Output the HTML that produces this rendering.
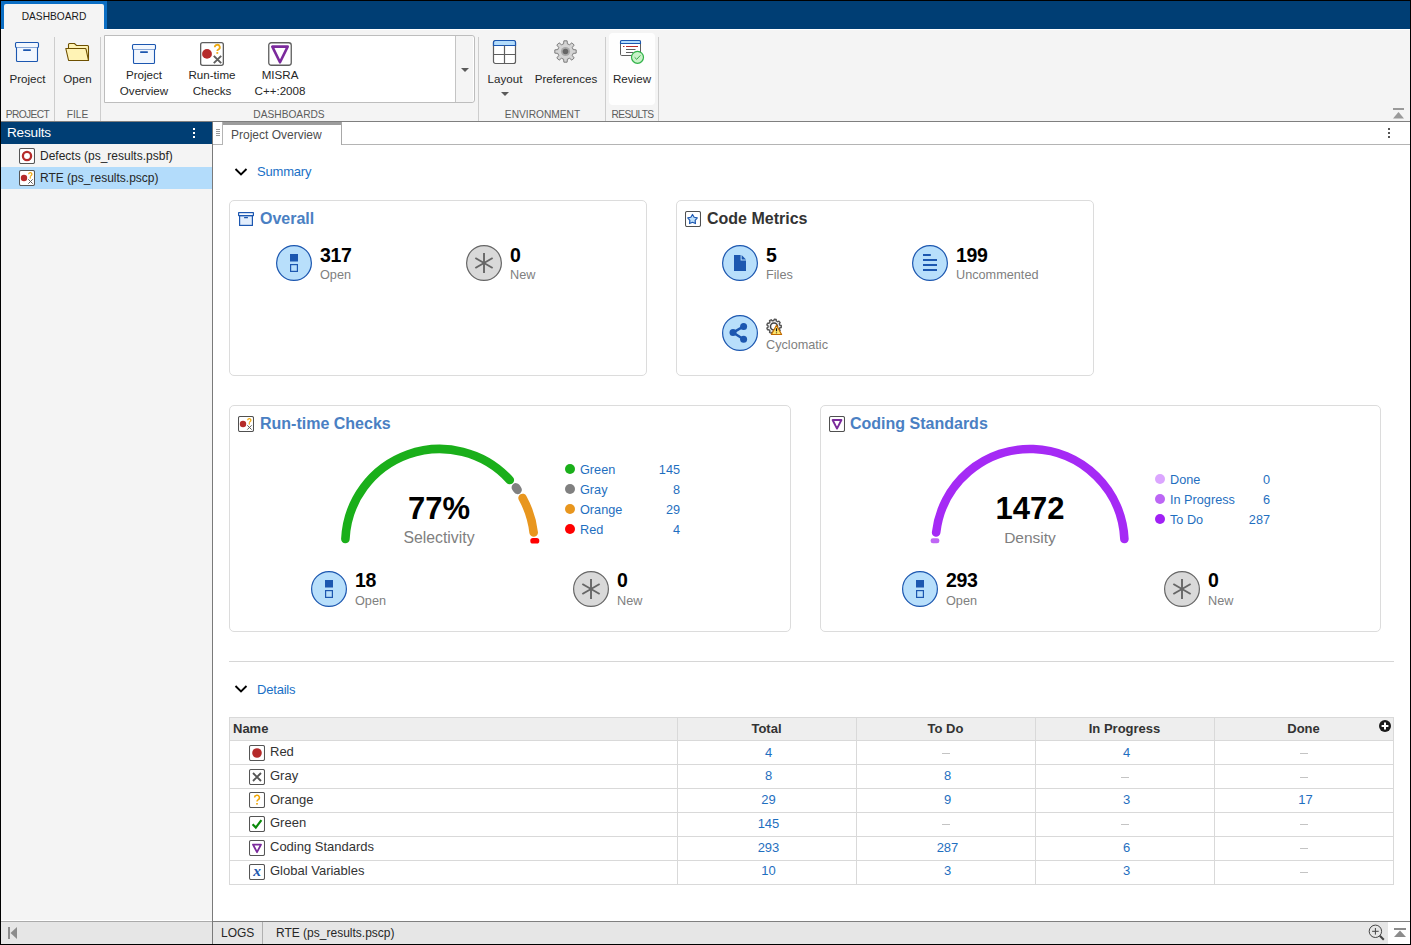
<!DOCTYPE html>
<html><head><meta charset="utf-8">
<style>
html,body{margin:0;padding:0;}
body{width:1411px;height:945px;position:relative;overflow:hidden;background:#000;font-family:"Liberation Sans",sans-serif;}
.a{position:absolute;}
.t{position:absolute;white-space:nowrap;line-height:1;font-family:"Liberation Sans",sans-serif;}
.c{text-align:center;}
.r{text-align:right;}
.sep{position:absolute;width:1px;background:#cdcdcd;}
.lbl{font-size:10.2px;color:#5c5c5c;}
.rb{font-size:11.6px;color:#262626;}
</style></head><body>
<!-- title bar -->
<div class="a" style="left:1px;top:1px;width:1409px;height:28px;background:#003e74;"></div>
<div class="a" style="left:1px;top:1px;width:106px;height:28px;background:#0b6ec4;"></div>
<div class="a" style="left:4px;top:4px;width:100px;height:26px;background:#f4f4f4;border-radius:2px 2px 0 0;"></div>
<div class="t" style="left:4px;top:12px;width:100px;font-size:10.2px;color:#1a1a1a;text-align:center;">DASHBOARD</div>
<div class="a" style="left:1px;top:29px;width:3px;height:1px;background:#fff;"></div>
<div class="a" style="left:104px;top:29px;width:1306px;height:1px;background:#fff;"></div>
<!-- ribbon -->
<div class="a" style="left:1px;top:30px;width:1409px;height:91px;background:#f4f4f4;"></div>
<div class="a" style="left:1px;top:121px;width:1409px;height:1px;background:#7f7f7f;"></div>
<div id="ribbon">
<!-- separators -->
<div class="sep" style="left:54px;top:37px;height:84px;"></div>
<div class="sep" style="left:100px;top:37px;height:84px;"></div>
<div class="sep" style="left:478px;top:37px;height:84px;"></div>
<div class="sep" style="left:605px;top:37px;height:84px;"></div>
<div class="sep" style="left:658px;top:37px;height:84px;"></div>
<!-- project -->
<svg class="a" style="left:14px;top:41px;" width="26" height="22" viewBox="0 0 26 22">
<rect x="1.5" y="1.5" width="23" height="5" rx="1" fill="#f2f7fe" stroke="#1c57b0" stroke-width="1.1"/>
<path d="M2.5 6.5 V19.5 a1 1 0 0 0 1 1 H22.5 a1 1 0 0 0 1 -1 V6.5" fill="#f2f7fe" stroke="#1c57b0" stroke-width="1.1"/>
<rect x="9" y="8.2" width="8" height="1.8" rx="0.8" fill="#1c57b0"/>
</svg>
<div class="t rb c" style="left:0px;top:73px;width:55px;">Project</div>
<div class="t lbl c" style="left:0px;top:110px;width:55px;letter-spacing:-0.6px;">PROJECT</div>
<!-- open -->
<svg class="a" style="left:64px;top:42px;" width="26" height="20" viewBox="0 0 26 20">
<path d="M4.5 10 V2.5 a1 1 0 0 1 1 -1 H10.5 l2 2 H23.5 a1 1 0 0 1 1 1 V18.5 H5" fill="#fff3b5" stroke="#6e5000" stroke-width="1.1"/>
<path d="M1.8 6.5 H21.2 a1 1 0 0 1 0.9 0.8 L24.5 18.5 H4.6 Z" fill="#fff3b5" stroke="#6e5000" stroke-width="1.1" stroke-linejoin="round"/>
</svg>
<div class="t rb c" style="left:55px;top:73px;width:45px;">Open</div>
<div class="t lbl c" style="left:55px;top:110px;width:45px;">FILE</div>
<!-- gallery -->
<div class="a" style="left:104px;top:35px;width:369px;height:66px;background:#fff;border:1px solid #bdbdbd;border-radius:0 3px 3px 0;"></div>
<div class="a" style="left:456px;top:36px;width:17px;height:66px;background:#f4f4f4;border-radius:0 2px 2px 0;"></div>
<div class="a" style="left:455px;top:36px;width:1px;height:66px;background:#c4c4c4;"></div>
<svg class="a" style="left:460px;top:67px;" width="10" height="6" viewBox="0 0 10 6"><path d="M1 1 H9 L5 5 Z" fill="#5a5a5a"/></svg>
<svg class="a" style="left:131px;top:43px;" width="26" height="22" viewBox="0 0 26 22">
<rect x="1.5" y="1.5" width="23" height="5" rx="1" fill="#f2f7fe" stroke="#1c57b0" stroke-width="1.1"/>
<path d="M2.5 6.5 V19.5 a1 1 0 0 0 1 1 H22.5 a1 1 0 0 0 1 -1 V6.5" fill="#f2f7fe" stroke="#1c57b0" stroke-width="1.1"/>
<rect x="9" y="8.2" width="8" height="1.8" rx="0.8" fill="#1c57b0"/>
</svg>
<div class="t rb c" style="left:104px;top:69px;width:80px;">Project</div>
<div class="t rb c" style="left:104px;top:85px;width:80px;">Overview</div>
<svg class="a" style="left:200px;top:42px;" width="24" height="24" viewBox="0 0 24 24">
<rect x="0.65" y="0.65" width="22.7" height="22.7" rx="2" fill="#fff" stroke="#5e5e5e" stroke-width="1.3"/>
<circle cx="7" cy="11.9" r="4.9" fill="#b52a2a"/>
<path d="M14.8 5.2 a2.5 2.5 0 1 1 3.6 2.3 c-0.8 0.4 -1.1 0.7 -1.1 1.6" fill="none" stroke="#eea90f" stroke-width="1.8"/>
<rect x="16.4" y="10.1" width="1.8" height="1.7" fill="#eea90f"/>
<path d="M13.8 13.8 L21.2 21.2 M21.2 13.8 L13.8 21.2" stroke="#5e5e5e" stroke-width="1.9"/>
</svg>
<div class="t rb c" style="left:172px;top:69px;width:80px;">Run-time</div>
<div class="t rb c" style="left:172px;top:85px;width:80px;">Checks</div>
<svg class="a" style="left:268px;top:42px;" width="24" height="24" viewBox="0 0 24 24">
<rect x="0.75" y="0.75" width="22.5" height="22.5" rx="2.5" fill="#fff" stroke="#5e5e5e" stroke-width="1.3"/>
<path d="M4.3 4.6 H19.7 L12 20.3 Z" fill="none" stroke="#7b2a9c" stroke-width="2.6" stroke-linejoin="round"/>
</svg>
<div class="t rb c" style="left:240px;top:69px;width:80px;">MISRA</div>
<div class="t rb c" style="left:240px;top:85px;width:80px;">C++:2008</div>
<div class="t lbl c" style="left:240px;top:110px;width:98px;">DASHBOARDS</div>
<!-- layout -->
<svg class="a" style="left:492px;top:39px;" width="25" height="26" viewBox="0 0 25 26">
<rect x="1.5" y="1.5" width="22" height="23" rx="2" fill="#fff" stroke="#5e5e5e" stroke-width="1.2"/>
<path d="M1.5 6.5 V3.5 a2 2 0 0 1 2 -2 H21.5 a2 2 0 0 1 2 2 V6.5 Z" fill="#b3dcfb" stroke="#1c57b0" stroke-width="1.2"/>
<path d="M12.5 6.5 V24.5 M1.5 15.5 H23.5" stroke="#5e5e5e" stroke-width="1.2"/>
</svg>
<div class="t rb c" style="left:480px;top:73px;width:50px;">Layout</div>
<svg class="a" style="left:500px;top:91px;" width="10" height="6" viewBox="0 0 10 6"><path d="M1 1 H9 L5 5 Z" fill="#5a5a5a"/></svg>
<!-- preferences -->
<svg class="a" style="left:553px;top:39px;" width="25" height="25" viewBox="-12.5 -12.5 25 25">
<path d="M10.68 -1.61 L10.68 1.61 L7.67 1.90 L6.77 4.07 L8.69 6.42 L6.42 8.69 L4.07 6.77 L1.90 7.67 L1.61 10.68 L-1.61 10.68 L-1.90 7.67 L-4.07 6.77 L-6.42 8.69 L-8.69 6.42 L-6.77 4.07 L-7.67 1.90 L-10.68 1.61 L-10.68 -1.61 L-7.67 -1.90 L-6.77 -4.07 L-8.69 -6.42 L-6.42 -8.69 L-4.07 -6.77 L-1.90 -7.67 L-1.61 -10.68 L1.61 -10.68 L1.90 -7.67 L4.07 -6.77 L6.42 -8.69 L8.69 -6.42 L6.77 -4.07 L7.67 -1.90 Z" stroke-linejoin="round" fill="#d4d4d4" stroke="#7c7c7c" stroke-width="1"/>
<circle r="4.6" fill="#a9a9a9"/>
<circle r="2.8" fill="#666"/>
</svg>
<div class="t rb c" style="left:530px;top:73px;width:72px;">Preferences</div>
<div class="t lbl c" style="left:480px;top:110px;width:125px;">ENVIRONMENT</div>
<!-- review -->
<div class="a" style="left:609px;top:33px;width:46px;height:72px;background:#fefefe;border-radius:4px;"></div>
<svg class="a" style="left:619px;top:39px;" width="28" height="26" viewBox="0 0 28 26">
<rect x="1.5" y="1.5" width="20" height="15" rx="1.2" fill="#fff" stroke="#5e5e5e" stroke-width="1"/>
<path d="M1.5 4.5 V2.7 a1.2 1.2 0 0 1 1.2 -1.2 H20.3 a1.2 1.2 0 0 1 1.2 1.2 V4.5 Z" fill="#b3dcfb" stroke="#1c57b0" stroke-width="1.1"/>
<path d="M4 7.5 H5.5 M7 7.5 H19" stroke="#b52a2a" stroke-width="1"/>
<path d="M7 10.5 H16.5 M7 13.5 H14.5" stroke="#5e5e5e" stroke-width="1"/>
<circle cx="18.5" cy="18.3" r="6" fill="#c9f2c9" stroke="#32b34a" stroke-width="1.2"/>
<path d="M15.6 18.3 L17.7 20.3 L21.4 16.4" fill="none" stroke="#2a9e3e" stroke-width="0.9"/>
</svg>
<div class="t rb c" style="left:607px;top:73px;width:50px;">Review</div>
<div class="t lbl c" style="left:606px;top:110px;width:53px;letter-spacing:-0.6px;">RESULTS</div>
<!-- collapse ribbon -->
<div class="a" style="left:1393px;top:108px;width:11px;height:2px;background:#9a9a9a;"></div>
<svg class="a" style="left:1392px;top:111px;" width="13" height="8" viewBox="0 0 13 8"><path d="M1 7.5 L6.5 1 L12 7.5 Z" fill="#9a9a9a"/></svg>
</div>
<!-- left panel -->
<div class="a" style="left:1px;top:122px;width:211px;height:799px;background:#f4f4f4;"></div>
<div class="a" style="left:1px;top:122px;width:211px;height:22px;background:#003e74;"></div>
<div class="t" style="left:7px;top:126px;font-size:13.6px;letter-spacing:-0.2px;color:#fff;">Results</div>
<div class="a" style="left:193px;top:128px;width:2px;height:2px;background:#fff;"></div>
<div class="a" style="left:193px;top:132px;width:2px;height:2px;background:#fff;"></div>
<div class="a" style="left:193px;top:136px;width:2px;height:2px;background:#fff;"></div>
<div class="a" style="left:1px;top:167px;width:211px;height:22px;background:#b3dcfb;"></div>
<div id="leftrows">
<svg class="a" style="left:19px;top:148px;" width="16" height="16" viewBox="0 0 16 16">
<rect x="0.5" y="0.5" width="15" height="15" rx="1.5" fill="#fff" stroke="#555" stroke-width="1.05"/>
<circle cx="8" cy="8" r="4.1" fill="none" stroke="#b52a2a" stroke-width="2.3"/>
</svg>
<div class="t" style="left:40px;top:150px;font-size:12px;color:#262626;">Defects (ps_results.psbf)</div>
<svg class="a" style="left:19px;top:170px;" width="16" height="16" viewBox="0 0 16 16">
<rect x="0.5" y="0.5" width="15" height="15" rx="1.5" fill="#fff" stroke="#555" stroke-width="1.05"/>
<circle cx="5" cy="8" r="3.2" fill="#b52a2a"/>
<path d="M9.7 4.2 a1.6 1.6 0 1 1 2.3 1.5 c-0.5 0.3 -0.7 0.5 -0.7 1.1" fill="none" stroke="#eea90f" stroke-width="1.3"/>
<rect x="10.7" y="7.2" width="1.3" height="1.3" fill="#eea90f"/>
<path d="M9.3 9.3 L13.7 13.7 M13.7 9.3 L9.3 13.7" stroke="#5e5e5e" stroke-width="1"/>
</svg>
<div class="t" style="left:40px;top:172px;font-size:12px;color:#262626;">RTE (ps_results.pscp)</div>
</div>
<div class="a" style="left:1px;top:920px;width:211px;height:1px;background:#fff;"></div>
<div class="a" style="left:212px;top:122px;width:1px;height:822px;background:#7a7a7a;"></div>
<!-- main area -->
<div class="a" style="left:213px;top:122px;width:1197px;height:799px;background:#fff;"></div>
<div id="tabs">
<div class="a" style="left:213px;top:144px;width:1197px;height:1px;background:#b4b4b4;"></div>
<div class="a" style="left:213px;top:122px;width:9px;height:22px;background:#fff;border-right:1px solid #b4b4b4;"></div>
<div class="a" style="left:216px;top:129px;width:4px;height:1px;background:#999;"></div>
<div class="a" style="left:216px;top:131px;width:4px;height:1px;background:#999;"></div>
<div class="a" style="left:216px;top:133px;width:4px;height:1px;background:#999;"></div>
<div class="a" style="left:216px;top:135px;width:4px;height:1px;background:#999;"></div>
<div class="a" style="left:223px;top:122px;width:118px;height:23px;background:#fff;"></div>
<div class="a" style="left:223px;top:122px;width:118px;height:3px;background:#9c9c9c;"></div>
<div class="a" style="left:341px;top:122px;width:1px;height:23px;background:#a8a8a8;"></div>
<div class="t" style="left:231px;top:129px;font-size:12px;color:#4d4d4d;">Project Overview</div>
<div class="a" style="left:1388px;top:128px;width:2px;height:2px;background:#555;"></div>
<div class="a" style="left:1388px;top:132px;width:2px;height:2px;background:#555;"></div>
<div class="a" style="left:1388px;top:136px;width:2px;height:2px;background:#555;"></div>
</div>
<div id="content">
<svg class="a" style="left:234px;top:167px;" width="14" height="10" viewBox="0 0 14 10"><path d="M1.5 2 L7 7.5 L12.5 2" fill="none" stroke="#000" stroke-width="1.9"/></svg>
<div class="t" style="left:257px;top:165px;font-size:13px;color:#1a70c6;letter-spacing:-0.2px;">Summary</div>
<div class="a" style="left:229px;top:200px;width:418px;height:176px;box-sizing:border-box;border:1px solid #dcdcdc;border-radius:5px;background:#fff;"></div>
<div class="a" style="left:676px;top:200px;width:418px;height:176px;box-sizing:border-box;border:1px solid #dcdcdc;border-radius:5px;background:#fff;"></div>
<div class="a" style="left:229px;top:405px;width:562px;height:227px;box-sizing:border-box;border:1px solid #dcdcdc;border-radius:5px;background:#fff;"></div>
<div class="a" style="left:820px;top:405px;width:561px;height:227px;box-sizing:border-box;border:1px solid #dcdcdc;border-radius:5px;background:#fff;"></div>
<svg class="a" style="left:238px;top:212px;" width="16" height="14" viewBox="0 0 16 14">
<rect x="1" y="3" width="14" height="11" rx="0.6" fill="#1c57b0"/><rect x="2.2" y="4.2" width="11.6" height="8.6" fill="#e3eefc"/>
<rect x="0" y="0" width="16" height="4.2" rx="0.7" fill="#1c57b0"/><rect x="1.2" y="1.2" width="13.6" height="1.8" fill="#f8fbff"/>
<rect x="6" y="5" width="4" height="1.2" rx="0.5" fill="#1c57b0"/>
</svg>
<div class="t" style="left:260px;top:211px;font-size:16px;color:#4a80c3;font-weight:bold;">Overall</div>
<svg class="a" style="left:685px;top:211px;" width="16" height="16" viewBox="0 0 16 16">
<rect x="0.5" y="0.5" width="15" height="15" rx="1.5" fill="#fff" stroke="#505050" stroke-width="1.05"/>
<path d="M7.50 3.50 L9.15 6.23 L12.26 6.95 L10.16 9.37 L10.44 12.55 L7.50 11.30 L4.56 12.55 L4.84 9.37 L2.74 6.95 L5.85 6.23 Z" fill="#bfe0fb" stroke="#1c57b0" stroke-width="1.2" stroke-linejoin="round"/>
</svg>
<div class="t" style="left:707px;top:211px;font-size:16px;color:#333333;font-weight:bold;">Code Metrics</div>
<svg class="a" style="left:238px;top:416px;" width="16" height="16" viewBox="0 0 16 16">
<rect x="0.5" y="0.5" width="15" height="15" rx="1.5" fill="#fff" stroke="#505050" stroke-width="1.05"/>
<circle cx="5" cy="8" r="3.2" fill="#b52a2a"/>
<path d="M9.7 4.2 a1.6 1.6 0 1 1 2.3 1.5 c-0.5 0.3 -0.7 0.5 -0.7 1.1" fill="none" stroke="#eea90f" stroke-width="1.3"/>
<rect x="10.7" y="7.2" width="1.3" height="1.3" fill="#eea90f"/>
<path d="M9.3 9.3 L13.6 13.6 M13.6 9.3 L9.3 13.6" stroke="#5e5e5e" stroke-width="1"/>
</svg>
<div class="t" style="left:260px;top:416px;font-size:16px;color:#4a80c3;font-weight:bold;">Run-time Checks</div>
<svg class="a" style="left:829px;top:416px;" width="16" height="16" viewBox="0 0 16 16">
<rect x="0.5" y="0.5" width="15" height="15" rx="1.5" fill="#fff" stroke="#505050" stroke-width="1.05"/>
<path d="M3.6 4 H12.4 L8 12.6 Z" fill="none" stroke="#7b2a9c" stroke-width="1.9" stroke-linejoin="round"/>
</svg>
<div class="t" style="left:850px;top:416px;font-size:16px;color:#4a80c3;font-weight:bold;">Coding Standards</div>
<svg class="a" style="left:276px;top:245px;" width="36" height="36" viewBox="0 0 36 36">
<circle cx="18" cy="18" r="17.4" fill="#b8dffb" stroke="#1c57b0" stroke-width="1.2"/>
<rect x="14" y="9" width="8" height="7.5" fill="#1c57b0"/>
<rect x="14.6" y="19.6" width="6.8" height="6.8" fill="none" stroke="#1c57b0" stroke-width="1.2"/>
</svg>
<div class="t" style="left:320px;top:246px;font-size:19.5px;color:#000;font-weight:bold;letter-spacing:-0.3px;">317</div>
<div class="t" style="left:320px;top:269px;font-size:12.7px;color:#808080;">Open</div>
<svg class="a" style="left:466px;top:245px;" width="36" height="36" viewBox="0 0 36 36">
<circle cx="18" cy="18" r="17.4" fill="#d9d9d9" stroke="#666" stroke-width="1.2"/><line x1="18.00" y1="8.00" x2="18.00" y2="28.00" stroke="#666" stroke-width="1.9"/><line x1="26.66" y1="13.00" x2="9.34" y2="23.00" stroke="#666" stroke-width="1.9"/><line x1="26.66" y1="23.00" x2="9.34" y2="13.00" stroke="#666" stroke-width="1.9"/>
</svg>
<div class="t" style="left:510px;top:246px;font-size:19.5px;color:#000;font-weight:bold;letter-spacing:-0.3px;">0</div>
<div class="t" style="left:510px;top:269px;font-size:12.7px;color:#808080;">New</div>
<svg class="a" style="left:722px;top:245px;" width="36" height="36" viewBox="0 0 36 36">
<circle cx="18" cy="18" r="17.4" fill="#b8dffb" stroke="#1c57b0" stroke-width="1.2"/>
<path d="M12 10 H18.6 V15.5 H24 V26 H12 Z" fill="#1c57b0"/>
<path d="M19.6 10 L24 14.4 H19.6 Z" fill="#1c57b0"/>
</svg>
<div class="t" style="left:766px;top:246px;font-size:19.5px;color:#000;font-weight:bold;letter-spacing:-0.3px;">5</div>
<div class="t" style="left:766px;top:269px;font-size:12.7px;color:#808080;">Files</div>
<svg class="a" style="left:912px;top:245px;" width="36" height="36" viewBox="0 0 36 36">
<circle cx="18" cy="18" r="17.4" fill="#b8dffb" stroke="#1c57b0" stroke-width="1.2"/>
<path d="M11 10 H18.8 M11 15 H25 M11 20 H25 M11 25 H25" stroke="#1c57b0" stroke-width="2"/>
</svg>
<div class="t" style="left:956px;top:246px;font-size:19.5px;color:#000;font-weight:bold;letter-spacing:-0.3px;">199</div>
<div class="t" style="left:956px;top:269px;font-size:12.7px;color:#808080;">Uncommented</div>
<svg class="a" style="left:722px;top:315px;" width="36" height="36" viewBox="0 0 36 36">
<circle cx="18" cy="18" r="17.4" fill="#b8dffb" stroke="#1c57b0" stroke-width="1.2"/>
<path d="M21.6 11.4 L11 17.6 L21.6 24.3" fill="none" stroke="#1c57b0" stroke-width="2.4"/>
<circle cx="21.6" cy="11.4" r="3.5" fill="#1c57b0"/><circle cx="11" cy="17.6" r="3.5" fill="#1c57b0"/><circle cx="21.6" cy="24.3" r="3.5" fill="#1c57b0"/>
</svg>
<div class="t" style="left:766px;top:339px;font-size:12.7px;color:#808080;">Cyclomatic</div>
<svg class="a" style="left:765px;top:318px;" width="18" height="18" viewBox="0 0 18 18">
<g transform="translate(9 8.5)"><path d="M7.24 -0.97 L7.24 0.97 L5.86 1.29 L5.32 2.78 L6.16 3.91 L4.92 5.39 L3.66 4.75 L2.29 5.55 L2.21 6.96 L0.31 7.29 L-0.25 5.99 L-1.81 5.72 L-2.78 6.75 L-4.45 5.78 L-4.05 4.43 L-5.07 3.21 L-6.47 3.38 L-7.13 1.57 L-5.95 0.79 L-5.95 -0.79 L-7.13 -1.57 L-6.47 -3.38 L-5.07 -3.21 L-4.05 -4.43 L-4.45 -5.78 L-2.78 -6.75 L-1.81 -5.72 L-0.25 -5.99 L0.31 -7.29 L2.21 -6.96 L2.29 -5.55 L3.66 -4.75 L4.92 -5.39 L6.16 -3.91 L5.32 -2.78 L5.86 -1.29 Z" fill="#efefef" stroke="#555" stroke-width="1.4" stroke-linejoin="round"/><circle r="3.5" fill="#fff" stroke="#444" stroke-width="1.5"/></g>
<path d="M11.5 7.3 L16.6 16.5 H6.4 Z" fill="#ffe56b" stroke="#c06a00" stroke-width="1.2" stroke-linejoin="round"/>
<path d="M11.5 10.2 V13.3 M11.5 14.4 V15.3" stroke="#111" stroke-width="1.2"/>
</svg>
<svg class="a" style="left:311px;top:571px;" width="36" height="36" viewBox="0 0 36 36">
<circle cx="18" cy="18" r="17.4" fill="#b8dffb" stroke="#1c57b0" stroke-width="1.2"/>
<rect x="14" y="9" width="8" height="7.5" fill="#1c57b0"/>
<rect x="14.6" y="19.6" width="6.8" height="6.8" fill="none" stroke="#1c57b0" stroke-width="1.2"/>
</svg>
<div class="t" style="left:355px;top:571px;font-size:19.5px;color:#000;font-weight:bold;letter-spacing:-0.3px;">18</div>
<div class="t" style="left:355px;top:595px;font-size:12.7px;color:#808080;">Open</div>
<svg class="a" style="left:573px;top:571px;" width="36" height="36" viewBox="0 0 36 36">
<circle cx="18" cy="18" r="17.4" fill="#d9d9d9" stroke="#666" stroke-width="1.2"/><line x1="18.00" y1="8.00" x2="18.00" y2="28.00" stroke="#666" stroke-width="1.9"/><line x1="26.66" y1="13.00" x2="9.34" y2="23.00" stroke="#666" stroke-width="1.9"/><line x1="26.66" y1="23.00" x2="9.34" y2="13.00" stroke="#666" stroke-width="1.9"/>
</svg>
<div class="t" style="left:617px;top:571px;font-size:19.5px;color:#000;font-weight:bold;letter-spacing:-0.3px;">0</div>
<div class="t" style="left:617px;top:595px;font-size:12.7px;color:#808080;">New</div>
<svg class="a" style="left:902px;top:571px;" width="36" height="36" viewBox="0 0 36 36">
<circle cx="18" cy="18" r="17.4" fill="#b8dffb" stroke="#1c57b0" stroke-width="1.2"/>
<rect x="14" y="9" width="8" height="7.5" fill="#1c57b0"/>
<rect x="14.6" y="19.6" width="6.8" height="6.8" fill="none" stroke="#1c57b0" stroke-width="1.2"/>
</svg>
<div class="t" style="left:946px;top:571px;font-size:19.5px;color:#000;font-weight:bold;letter-spacing:-0.3px;">293</div>
<div class="t" style="left:946px;top:595px;font-size:12.7px;color:#808080;">Open</div>
<svg class="a" style="left:1164px;top:571px;" width="36" height="36" viewBox="0 0 36 36">
<circle cx="18" cy="18" r="17.4" fill="#d9d9d9" stroke="#666" stroke-width="1.2"/><line x1="18.00" y1="8.00" x2="18.00" y2="28.00" stroke="#666" stroke-width="1.9"/><line x1="26.66" y1="13.00" x2="9.34" y2="23.00" stroke="#666" stroke-width="1.9"/><line x1="26.66" y1="23.00" x2="9.34" y2="13.00" stroke="#666" stroke-width="1.9"/>
</svg>
<div class="t" style="left:1208px;top:571px;font-size:19.5px;color:#000;font-weight:bold;letter-spacing:-0.3px;">0</div>
<div class="t" style="left:1208px;top:595px;font-size:12.7px;color:#808080;">New</div>
<svg class="a" style="left:329px;top:433px;" width="220" height="120" viewBox="329 433 220 120"><path d="M345.40 539.05 A94.5 94.5 0 0 1 509.81 480.02" fill="none" stroke="#1aaf1a" stroke-width="8.6" stroke-linecap="round"/><path d="M515.86 487.42 A94.5 94.5 0 0 1 517.59 489.84" fill="none" stroke="#808080" stroke-width="8.6" stroke-linecap="round"/><path d="M522.61 497.97 A94.5 94.5 0 0 1 533.65 532.47" fill="none" stroke="#e8961e" stroke-width="8.6" stroke-linecap="round"/><rect x="530.3" y="538" width="9" height="5.6" rx="2.6" fill="#ff0000"/></svg>
<div class="t" style="left:339px;top:493px;font-size:31px;color:#000;font-weight:bold;width:200px;text-align:center;">77%</div>
<div class="t" style="left:339px;top:530px;font-size:15.8px;color:#808080;width:200px;text-align:center;">Selectivity</div>
<svg class="a" style="left:920px;top:433px;" width="220" height="120" viewBox="920 433 220 120"><path d="M936.15 532.47 A94.5 94.5 0 0 1 1124.40 539.05" fill="none" stroke="#a52af5" stroke-width="8.6" stroke-linecap="round"/><rect x="930.6" y="538.2" width="8.8" height="5" rx="2.3" fill="#bf66f5"/></svg>
<div class="t" style="left:930px;top:493px;font-size:31px;color:#000;font-weight:bold;width:200px;text-align:center;">1472</div>
<div class="t" style="left:930px;top:530px;font-size:15.5px;color:#808080;width:200px;text-align:center;">Density</div>
<div class="a" style="left:565px;top:464px;width:10px;height:10px;border-radius:50%;background:#1aaf1a;"></div>
<div class="t" style="left:580px;top:464px;font-size:12.7px;color:#1f6fc0;">Green</div>
<div class="t" style="left:620px;top:464px;font-size:12.7px;color:#1f6fc0;width:60px;text-align:right;">145</div>
<div class="a" style="left:565px;top:484px;width:10px;height:10px;border-radius:50%;background:#808080;"></div>
<div class="t" style="left:580px;top:484px;font-size:12.7px;color:#1f6fc0;">Gray</div>
<div class="t" style="left:620px;top:484px;font-size:12.7px;color:#1f6fc0;width:60px;text-align:right;">8</div>
<div class="a" style="left:565px;top:504px;width:10px;height:10px;border-radius:50%;background:#e8961e;"></div>
<div class="t" style="left:580px;top:504px;font-size:12.7px;color:#1f6fc0;">Orange</div>
<div class="t" style="left:620px;top:504px;font-size:12.7px;color:#1f6fc0;width:60px;text-align:right;">29</div>
<div class="a" style="left:565px;top:524px;width:10px;height:10px;border-radius:50%;background:#ff0000;"></div>
<div class="t" style="left:580px;top:524px;font-size:12.7px;color:#1f6fc0;">Red</div>
<div class="t" style="left:620px;top:524px;font-size:12.7px;color:#1f6fc0;width:60px;text-align:right;">4</div>
<div class="a" style="left:1155px;top:474px;width:10px;height:10px;border-radius:50%;background:#dba6ff;"></div>
<div class="t" style="left:1170px;top:474px;font-size:12.7px;color:#1f6fc0;">Done</div>
<div class="t" style="left:1210px;top:474px;font-size:12.7px;color:#1f6fc0;width:60px;text-align:right;">0</div>
<div class="a" style="left:1155px;top:494px;width:10px;height:10px;border-radius:50%;background:#bc66f5;"></div>
<div class="t" style="left:1170px;top:494px;font-size:12.7px;color:#1f6fc0;">In Progress</div>
<div class="t" style="left:1210px;top:494px;font-size:12.7px;color:#1f6fc0;width:60px;text-align:right;">6</div>
<div class="a" style="left:1155px;top:514px;width:10px;height:10px;border-radius:50%;background:#a020f5;"></div>
<div class="t" style="left:1170px;top:514px;font-size:12.7px;color:#1f6fc0;">To Do</div>
<div class="t" style="left:1210px;top:514px;font-size:12.7px;color:#1f6fc0;width:60px;text-align:right;">287</div>
<div class="a" style="left:229px;top:661px;width:1165px;height:1px;background:#d6d6d6;"></div>
<svg class="a" style="left:234px;top:684px;" width="14" height="10" viewBox="0 0 14 10"><path d="M1.5 2 L7 7.5 L12.5 2" fill="none" stroke="#000" stroke-width="1.9"/></svg>
<div class="t" style="left:257px;top:683px;font-size:13px;color:#1a70c6;letter-spacing:-0.2px;">Details</div>
<div class="a" style="left:229px;top:717px;width:1165px;height:168px;box-sizing:border-box;border:1px solid #d9d9d9;background:#fff;"></div>
<div class="a" style="left:230px;top:718px;width:1163px;height:23px;background:#eeeeee;"></div>
<div class="a" style="left:229px;top:740px;width:1165px;height:1px;background:#d9d9d9;"></div>
<div class="a" style="left:229px;top:764px;width:1165px;height:1px;background:#d9d9d9;"></div>
<div class="a" style="left:229px;top:788px;width:1165px;height:1px;background:#d9d9d9;"></div>
<div class="a" style="left:229px;top:812px;width:1165px;height:1px;background:#d9d9d9;"></div>
<div class="a" style="left:229px;top:836px;width:1165px;height:1px;background:#d9d9d9;"></div>
<div class="a" style="left:229px;top:860px;width:1165px;height:1px;background:#d9d9d9;"></div>
<div class="a" style="left:229px;top:884px;width:1165px;height:1px;background:#d9d9d9;"></div>
<div class="a" style="left:677px;top:717px;width:1px;height:168px;background:#d9d9d9;"></div>
<div class="a" style="left:856px;top:717px;width:1px;height:168px;background:#d9d9d9;"></div>
<div class="a" style="left:1035px;top:717px;width:1px;height:168px;background:#d9d9d9;"></div>
<div class="a" style="left:1214px;top:717px;width:1px;height:168px;background:#d9d9d9;"></div>
<div class="t" style="left:233px;top:722px;font-size:13px;color:#333;font-weight:bold;">Name</div>
<div class="t" style="left:677px;top:722px;font-size:13px;color:#333;font-weight:bold;width:179px;text-align:center;">Total</div>
<div class="t" style="left:856px;top:722px;font-size:13px;color:#333;font-weight:bold;width:179px;text-align:center;">To Do</div>
<div class="t" style="left:1035px;top:722px;font-size:13px;color:#333;font-weight:bold;width:179px;text-align:center;">In Progress</div>
<div class="t" style="left:1214px;top:722px;font-size:13px;color:#333;font-weight:bold;width:179px;text-align:center;">Done</div>
<svg class="a" style="left:1378px;top:719px;" width="14" height="14" viewBox="0 0 14 14"><circle cx="7" cy="7" r="6" fill="#1a1a1a"/><path d="M7 3.6 V10.4 M3.6 7 H10.4" stroke="#fff" stroke-width="2"/></svg>
<svg class="a" style="left:249px;top:745px;" width="16" height="16" viewBox="0 0 16 16"><rect x="0.5" y="0.5" width="15" height="15" rx="1.5" fill="#fff" stroke="#555" stroke-width="1.05"/><circle cx="8" cy="8" r="4.8" fill="#b52a2a"/></svg>
<div class="t" style="left:270px;top:745px;font-size:13px;color:#333;">Red</div>
<div class="t" style="left:679px;top:746px;font-size:13px;color:#1f6fc0;width:179px;text-align:center;">4</div>
<div class="a" style="left:942px;top:753px;width:8px;height:1px;background:#c4c4c4;"></div>
<div class="t" style="left:1037px;top:746px;font-size:13px;color:#1f6fc0;width:179px;text-align:center;">4</div>
<div class="a" style="left:1300px;top:753px;width:8px;height:1px;background:#c4c4c4;"></div>
<svg class="a" style="left:249px;top:769px;" width="16" height="16" viewBox="0 0 16 16"><rect x="0.5" y="0.5" width="15" height="15" rx="1.5" fill="#fff" stroke="#555" stroke-width="1.05"/><path d="M4 4 L12 12 M12 4 L4 12" stroke="#555" stroke-width="1.9"/></svg>
<div class="t" style="left:270px;top:769px;font-size:13px;color:#333;">Gray</div>
<div class="t" style="left:679px;top:769px;font-size:13px;color:#1f6fc0;width:179px;text-align:center;">8</div>
<div class="t" style="left:858px;top:769px;font-size:13px;color:#1f6fc0;width:179px;text-align:center;">8</div>
<div class="a" style="left:1121px;top:777px;width:8px;height:1px;background:#c4c4c4;"></div>
<div class="a" style="left:1300px;top:777px;width:8px;height:1px;background:#c4c4c4;"></div>
<svg class="a" style="left:249px;top:792px;" width="16" height="16" viewBox="0 0 16 16"><rect x="0.5" y="0.5" width="15" height="15" rx="1.5" fill="#fff" stroke="#555" stroke-width="1.05"/><path d="M5.6 5.6 a2.4 2.4 0 1 1 3.4 2.2 c-0.8 0.4 -1 0.8 -1 1.8" fill="none" stroke="#f0a500" stroke-width="1.5"/><rect x="7.2" y="11" width="1.6" height="1.6" fill="#f0a500"/></svg>
<div class="t" style="left:270px;top:793px;font-size:13px;color:#333;">Orange</div>
<div class="t" style="left:679px;top:793px;font-size:13px;color:#1f6fc0;width:179px;text-align:center;">29</div>
<div class="t" style="left:858px;top:793px;font-size:13px;color:#1f6fc0;width:179px;text-align:center;">9</div>
<div class="t" style="left:1037px;top:793px;font-size:13px;color:#1f6fc0;width:179px;text-align:center;">3</div>
<div class="t" style="left:1216px;top:793px;font-size:13px;color:#1f6fc0;width:179px;text-align:center;">17</div>
<svg class="a" style="left:249px;top:816px;" width="16" height="16" viewBox="0 0 16 16"><rect x="0.5" y="0.5" width="15" height="15" rx="1.5" fill="#fff" stroke="#555" stroke-width="1.05"/><path d="M3.6 8.2 L6.8 11.6 L12.4 4.2" fill="none" stroke="#0a8a0a" stroke-width="2.2"/></svg>
<div class="t" style="left:270px;top:816px;font-size:13px;color:#333;">Green</div>
<div class="t" style="left:679px;top:817px;font-size:13px;color:#1f6fc0;width:179px;text-align:center;">145</div>
<div class="a" style="left:942px;top:824px;width:8px;height:1px;background:#c4c4c4;"></div>
<div class="a" style="left:1121px;top:824px;width:8px;height:1px;background:#c4c4c4;"></div>
<div class="a" style="left:1300px;top:824px;width:8px;height:1px;background:#c4c4c4;"></div>
<svg class="a" style="left:249px;top:840px;" width="16" height="16" viewBox="0 0 16 16"><rect x="0.5" y="0.5" width="15" height="15" rx="1.5" fill="#fff" stroke="#555" stroke-width="1.05"/><path d="M4 4.6 H12 L8 12.2 Z" fill="none" stroke="#7b2a9c" stroke-width="1.8" stroke-linejoin="round"/></svg>
<div class="t" style="left:270px;top:840px;font-size:13px;color:#333;">Coding Standards</div>
<div class="t" style="left:679px;top:841px;font-size:13px;color:#1f6fc0;width:179px;text-align:center;">293</div>
<div class="t" style="left:858px;top:841px;font-size:13px;color:#1f6fc0;width:179px;text-align:center;">287</div>
<div class="t" style="left:1037px;top:841px;font-size:13px;color:#1f6fc0;width:179px;text-align:center;">6</div>
<div class="a" style="left:1300px;top:848px;width:8px;height:1px;background:#c4c4c4;"></div>
<svg class="a" style="left:249px;top:864px;" width="16" height="16" viewBox="0 0 16 16"><rect x="0.5" y="0.5" width="15" height="15" rx="1.5" fill="#fff" stroke="#555" stroke-width="1.05"/><text x="8" y="12.4" text-anchor="middle" font-family="Liberation Serif" font-style="italic" font-weight="bold" font-size="15.5" fill="#1c57b0">x</text></svg>
<div class="t" style="left:270px;top:864px;font-size:13px;color:#333;">Global Variables</div>
<div class="t" style="left:679px;top:864px;font-size:13px;color:#1f6fc0;width:179px;text-align:center;">10</div>
<div class="t" style="left:858px;top:864px;font-size:13px;color:#1f6fc0;width:179px;text-align:center;">3</div>
<div class="t" style="left:1037px;top:864px;font-size:13px;color:#1f6fc0;width:179px;text-align:center;">3</div>
<div class="a" style="left:1300px;top:872px;width:8px;height:1px;background:#c4c4c4;"></div>
</div>
<!-- status bar -->
<div class="a" style="left:1px;top:921px;width:211px;height:1px;background:#ababab;"></div>
<div class="a" style="left:213px;top:921px;width:1197px;height:1px;background:#808080;"></div>
<div class="a" style="left:1px;top:922px;width:1409px;height:22px;background:#e6e6e6;"></div>
<div class="a" style="left:212px;top:921px;width:1px;height:23px;background:#7a7a7a;"></div>
<div class="a" style="left:262px;top:922px;width:1px;height:22px;background:#b0b0b0;"></div>
<div class="t" style="left:221px;top:927px;font-size:12px;color:#262626;">LOGS</div>
<div class="t" style="left:276px;top:927px;font-size:12px;color:#262626;">RTE (ps_results.pscp)</div>
<div class="a" style="left:1388px;top:922px;width:22px;height:22px;background:#fff;"></div>
<div id="status">
<div class="a" style="left:8px;top:927px;width:2px;height:12px;background:#8c8c8c;"></div>
<svg class="a" style="left:10px;top:927px;" width="8" height="12" viewBox="0 0 8 12"><path d="M7 0 V12 L0.5 6 Z" fill="#8c8c8c"/></svg>
<svg class="a" style="left:1366px;top:922px;" width="22" height="22" viewBox="0 0 22 22">
<circle cx="9.4" cy="9.3" r="6.2" fill="none" stroke="#444" stroke-width="1"/>
<path d="M9.4 6 V12.6 M6.1 9.3 H12.7" stroke="#444" stroke-width="1"/>
<path d="M13.8 13.8 L17.8 17.8" stroke="#444" stroke-width="2"/>
</svg>
<div class="a" style="left:1394px;top:928px;width:12px;height:2px;background:#8c8c8c;"></div>
<svg class="a" style="left:1393px;top:930px;" width="14" height="8" viewBox="0 0 14 8"><path d="M1 7 L7 0.5 L13 7 Z" fill="#8c8c8c"/></svg>
</div>
</body></html>
